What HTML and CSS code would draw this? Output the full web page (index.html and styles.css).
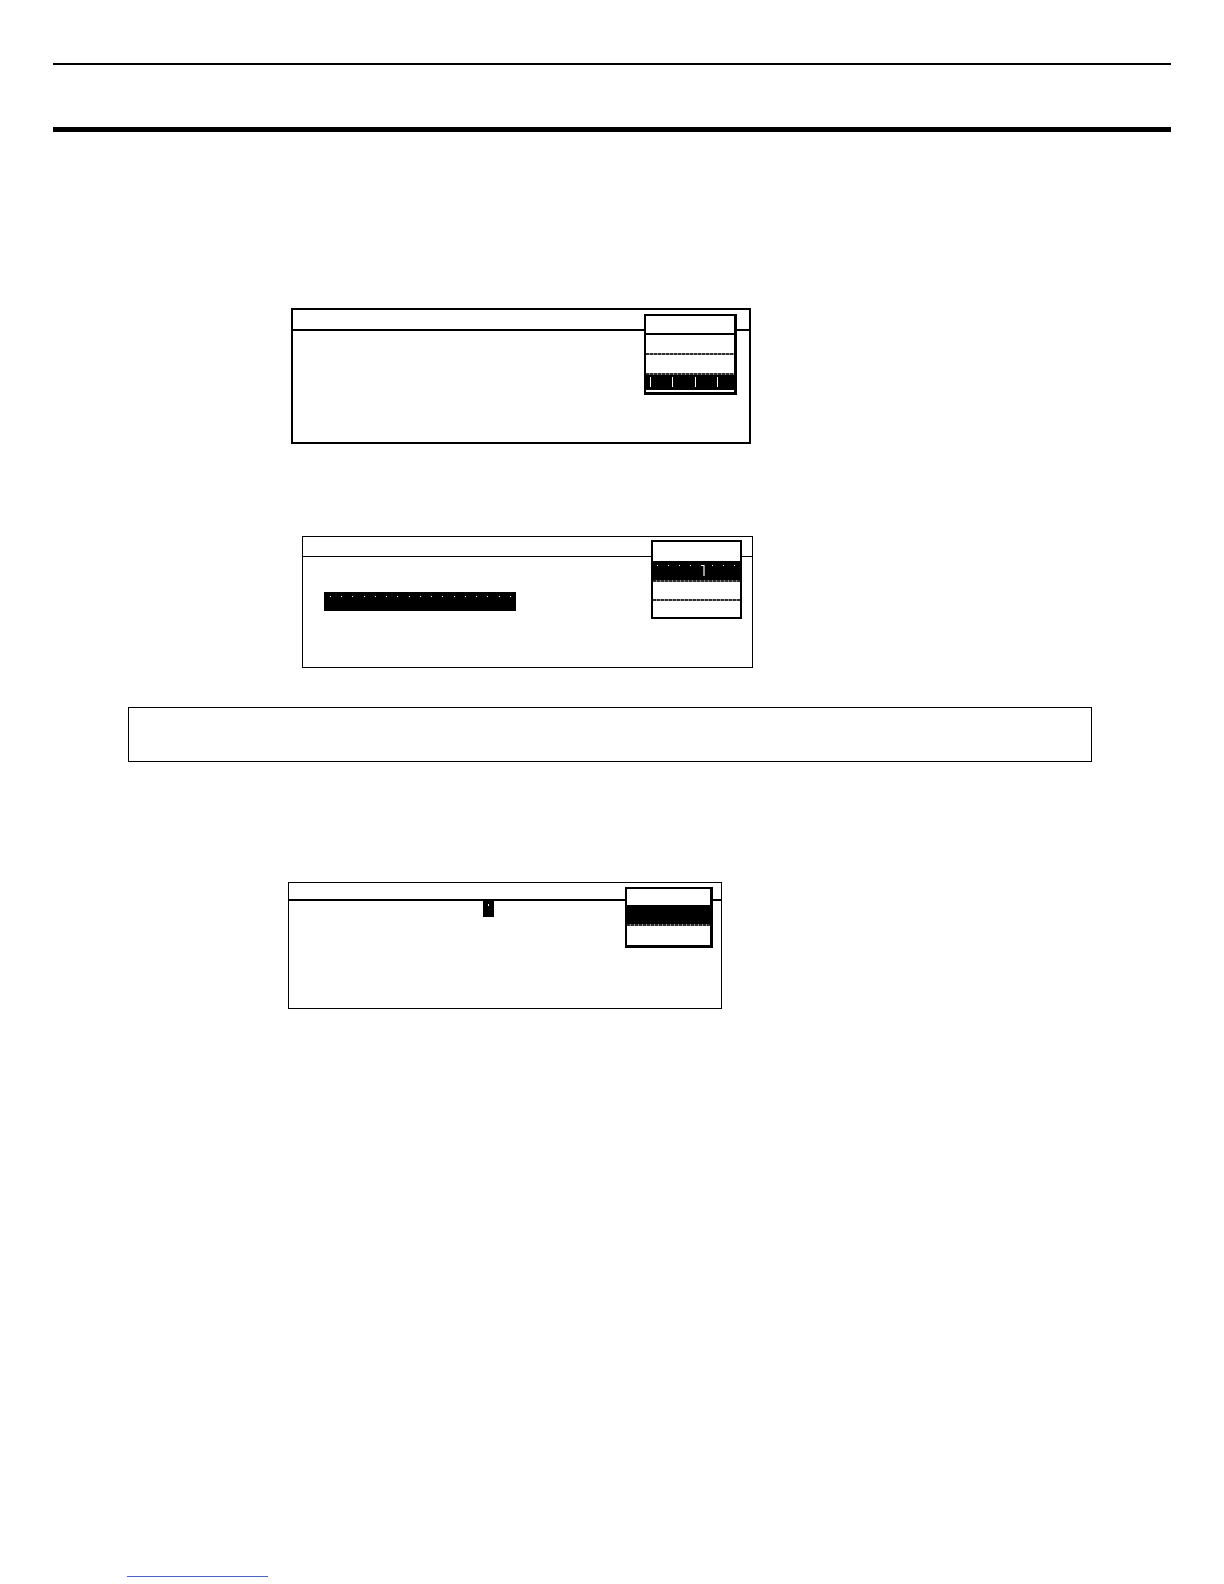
FILE: index.html
```html
<!DOCTYPE html>
<html lang="en">
<head>
<meta charset="utf-8">
<title>Screen layouts</title>
<link rel="stylesheet" href="styles.css">
</head>
<body>
<div class="page">
  <div class="rule-thin"></div>
  <div class="rule-thick"></div>

  <div class="screen screen-a">
    <div class="screen-head"></div>
    <div class="menu menu-a">
      <div class="m-row m-row-a"></div>
      <div class="m-solid"></div>
      <div class="m-row m-row-a2"></div>
      <div class="m-dash"></div>
      <div class="m-row m-row-a2"></div>
      <div class="m-dash"></div>
      <div class="m-sel m-sel-a">
        <span class="tick"></span><span class="tick"></span><span class="tick"></span><span class="tick"></span>
      </div>
      <div class="m-white-line"></div>
    </div>
  </div>

  <div class="screen screen-b">
    <div class="screen-head"></div>
    <div class="field-bar"><div class="field-dots"></div></div>
    <div class="menu menu-b">
      <div class="m-row m-row-b"></div>
      <div class="m-sel m-sel-b">
        <div class="sel-dots"></div>
        <svg class="cursor" width="4" height="11" viewBox="0 0 4 11"><path d="M1 0.5H3V11" fill="none" stroke="#fff" stroke-width="1.2"/></svg>
      </div>
      <div class="m-dash"></div>
      <div class="m-row m-row-b2"></div>
      <div class="m-dash"></div>
      <div class="m-row m-row-b3"></div>
    </div>
  </div>

  <div class="info-bar"></div>

  <div class="screen screen-c">
    <div class="screen-head"></div>
    <div class="cursor-block"><span class="cursor-dot"></span></div>
    <div class="menu menu-c">
      <div class="m-row m-row-c"></div>
      <div class="m-sel m-sel-c"></div>
      <div class="m-dash"></div>
      <div class="m-row m-row-c2"></div>
    </div>
  </div>

  <div class="footer-line"></div>
</div>
</body>
</html>
```

FILE: styles.css
```css
* { box-sizing: border-box; }

html, body {
  margin: 0;
  padding: 0;
  background: #ffffff;
  font-family: "Liberation Sans", Arial, sans-serif;
}

.page {
  width: 1224px;
  min-height: 1584px;
  padding: 0 53px;
  display: flex;
  flex-direction: column;
  align-items: flex-start;
}

.rule-thin {
  align-self: stretch;
  margin-top: 63px;
  height: 1.5px;
  background: #000;
}

.rule-thick {
  align-self: stretch;
  margin-top: 62px;
  height: 5px;
  background: #000;
}

/* screen frames */
.screen {
  position: relative;
  border: 2px solid #000;
  background: #fff;
}

.screen-head {
  border-bottom: 2px solid #000;
}

.screen-a {
  margin-top: 176px;
  margin-left: 238px;
  width: 460px;
  height: 136px;
}
.screen-a .screen-head { height: 21px; }

.screen-b {
  margin-top: 92px;
  margin-left: 249px;
  width: 451px;
  height: 132px;
  border-width: 1.5px;
}
.screen-b .screen-head { height: 20px; border-bottom-width: 1.5px; }

.screen-c {
  margin-top: 120px;
  margin-left: 235px;
  width: 434px;
  height: 127px;
  border-width: 1.5px;
}
.screen-c .screen-head { height: 18.5px; border-bottom-width: 2px; }

/* popup menus */
.menu {
  position: absolute;
  background: #fff;
  border: 2px solid #000;
  border-right-width: 3px;
  display: flex;
  flex-direction: column;
}

.menu-a {
  left: 351px;
  top: 4px;
  width: 93px;
  height: 81px;
  border-bottom-width: 3px;
}

.menu-b {
  left: 347.5px;
  top: 3.5px;
  width: 91px;
  height: 79px;
  border-right-width: 2px;
}

.menu-c {
  left: 335.5px;
  top: 4px;
  width: 88px;
  height: 61px;
  border-bottom-width: 3px;
}

.m-row { background: #fff; }
.m-row-a { height: 17.5px; }
.m-row-a2 { height: 18.5px; }
.m-row-b { height: 18.5px; }
.m-row-b2 { height: 17.5px; }
.m-row-b3 { flex: 1; }
.m-row-c { height: 16.5px; }
.m-row-c2 { flex: 1; }

.m-solid {
  height: 2px;
  background: #000;
}

.m-dash {
  height: 2px;
  background: repeating-linear-gradient(90deg, #2e2e2e 0 3px, #8a8a8a 3px 4px);
}

.m-sel {
  background: #000;
  position: relative;
}

.m-sel-a {
  height: 16px;
  display: flex;
  justify-content: space-between;
  padding: 2px 16px 3px 4px;
}

.tick {
  width: 1.2px;
  height: 10px;
  background: #fff;
}

.m-white-line {
  height: 1.2px;
  background: #fff;
  margin: 0 2px;
}

.m-sel-b { height: 19px; }

.sel-dots {
  position: absolute;
  left: 4px;
  right: 2px;
  top: 4px;
  height: 1px;
  background: repeating-linear-gradient(90deg, #fff 0 1px, transparent 1px 11px);
}

.cursor {
  position: absolute;
  left: 48px;
  top: 4px;
  display: block;
}

.m-sel-c { height: 19px; }

/* field bar in screen b */
.field-bar {
  margin-top: 35.5px;
  margin-left: 20.5px;
  width: 192px;
  height: 19px;
  background: #000;
  padding-top: 4px;
  padding-left: 6px;
}

.field-dots {
  height: 1px;
  width: 182px;
  background: repeating-linear-gradient(90deg, #fff 0 1px, transparent 1px 11.25px);
}

/* cursor block in screen c */
.cursor-block {
  margin-left: 193.5px;
  width: 11px;
  height: 16px;
  background: #000;
  position: relative;
}

.cursor-dot {
  position: absolute;
  left: 5px;
  top: 3px;
  width: 1.5px;
  height: 1.5px;
  background: #fff;
}

/* info bar */
.info-bar {
  margin-top: 39px;
  margin-left: 75px;
  width: 964px;
  height: 55px;
  border: 1.5px solid #000;
  background: #fff;
}

/* footer link-ish line */
.footer-line {
  margin-top: 567px;
  margin-left: 74px;
  width: 141px;
  height: 1px;
  background: #4a63c8;
}
```
